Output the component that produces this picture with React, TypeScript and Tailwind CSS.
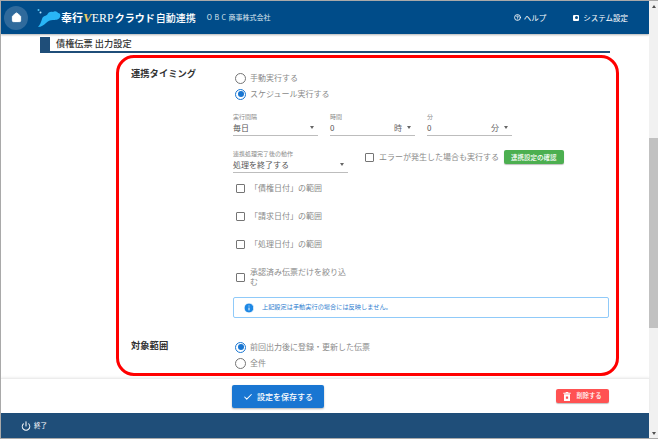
import { Check, Home, Info, Power, HelpCircle } from 'lucide-react';

const font = { fontFamily: '"Noto Sans CJK JP", "Noto Sans", sans-serif' };

function Radio({ label, checked }: { label: string; checked?: boolean }) {
  return (
    <div className="ml-[2px] flex h-4 items-center gap-[4px]">
      <span
        className={`flex h-[11px] w-[11px] items-center justify-center rounded-full border ${
          checked ? 'border-[#1976d2]' : 'border-[#757575]'
        }`}
      >
        {checked && <span className="h-[6px] w-[6px] rounded-full bg-[#1976d2]" />}
      </span>
      <span className="text-[8px] leading-none text-[#8a8a8a]">{label}</span>
    </div>
  );
}

function CheckBox({ label, className = '' }: { label: string; className?: string }) {
  return (
    <div className={`flex items-center gap-[5px] ${className}`}>
      <span className="h-[9px] w-[9px] shrink-0 rounded-[1px] border border-[#757575]" />
      <span className="text-[8px] leading-[10px] text-[#8a8a8a]">{label}</span>
    </div>
  );
}

function Select({
  label,
  value,
  unit,
  className = '',
}: {
  label: string;
  value: string;
  unit?: string;
  className?: string;
}) {
  return (
    <div className={className}>
      <div className="h-[8px] text-[6px] leading-[8px] text-[#8a8a8a]">{label}</div>
      <div className="flex h-[15px] items-center border-b border-[#bdbdbd] pb-[1px] pr-[4px]">
        <span className="flex-1 text-[8px] leading-none text-[#555]">{value}</span>
        {unit && <span className="mr-[5px] text-[8px] leading-none text-[#666]">{unit}</span>}
        <span className="h-0 w-0 border-x-[2.5px] border-t-[3px] border-x-transparent border-t-[#666]" />
      </div>
    </div>
  );
}

function Scrollbar() {
  return (
    <div className="flex w-[9px] shrink-0 flex-col items-center bg-[#f1f1f1]">
      <span className="mt-[4px] h-0 w-0 border-x-[2.5px] border-b-[3px] border-x-transparent border-b-[#505050]" />
      <div className="mt-[130px] h-[190px] w-full bg-[#c1c1c1]" />
      <div className="flex-1" />
      <span className="mb-[3px] h-0 w-0 border-x-[2.5px] border-t-[3px] border-x-transparent border-t-[#505050]" />
    </div>
  );
}

export default function App() {
  return (
    <div
      className="relative flex h-[439px] w-[658px] overflow-hidden border-l border-t border-b border-[#a9a9a9] bg-white"
      style={font}
    >
      <div className="flex min-w-0 flex-1 flex-col">
        {/* Header */}
        <header className="flex h-[33px] shrink-0 items-center bg-[#004c89] shadow-[0_1px_2px_rgba(0,0,0,0.3)]">
          <div className="ml-[3px] flex h-6 w-6 items-center justify-center rounded-full bg-[#2f6a9c]">
            <Home className="h-[11px] w-[11px] fill-white text-white" />
          </div>
          <svg viewBox="0 0 24 20" className="ml-[9px] h-[20px] w-[24px] shrink-0">
            <circle cx="1.5" cy="2" r="1" fill="#4fc3f7" />
            <circle cx="3.5" cy="4.5" r="1" fill="#b3e5fc" />
            <path
              d="M1 19 C3 17 4 14 5 11 C6 8 8 8 10 7 C11 4 14 3 16 4 C18 2 21 4 21 5 C23 5 24 7 23 9 C22 12 18 12 16 12 C13 12 11 13 9 15 C7 17 4 19 1 19Z"
              fill="#29b6f6"
            />
          </svg>
          <div className="flex items-baseline whitespace-nowrap font-bold text-white">
            <span className="text-[11px] leading-none">奉行</span>
            <span
              className="text-[13px] italic leading-none text-[#f2cf63]"
              style={{ fontFamily: '"Liberation Serif", serif' }}
            >
              V
            </span>
            <span
              className="mr-[1px] text-[12px] font-normal leading-none"
              style={{ fontFamily: '"Liberation Serif", serif' }}
            >
              ERP
            </span>
            <span className="text-[10px] leading-none">クラウド</span>
            <span className="ml-[1px] text-[10px] font-medium leading-none">自動連携</span>
          </div>
          <span className="ml-[11px] whitespace-nowrap text-[7px] leading-none text-[#dce6ef]">
            <span className="tracking-[2.5px]">OBC</span>商事株式会社
          </span>
          <div className="flex-1" />
          <div className="flex items-center gap-[3px] text-white">
            <HelpCircle className="h-[7px] w-[7px]" strokeWidth={3} />
            <span className="text-[7.5px] leading-none">ヘルプ</span>
          </div>
          <div className="ml-[27px] mr-[21px] flex items-center gap-[4px] text-white">
            <span className="flex h-[6px] w-[6px] items-center justify-center rounded-[1px] bg-white">
              <span className="h-[3px] w-[3px] rounded-full bg-[#004c89]" />
            </span>
            <span className="text-[7.5px] leading-none">システム設定</span>
          </div>
        </header>

        {/* Body */}
        <main className="relative min-h-0 flex-1 overflow-hidden pl-[39px] pr-[39px]">
          <div className="mt-[3px] flex h-4 items-stretch border-b-2 border-[#1f4e79]">
            <div className="w-[10px] bg-[#1f4e79]" />
            <h1 className="ml-[6px] self-center text-[9.2px] font-medium leading-none text-[#333]">
              債権伝票 出力設定
            </h1>
          </div>

          <div className="ml-[91px] mt-[14px] flex">
            <div className="w-[102px] shrink-0">
              <h2 className="mt-[2px] text-[9.3px] font-bold leading-none text-[#333]">連携タイミング</h2>
            </div>
            <div className="min-w-0 flex-1">
              <div className="mt-[3px]">
                <Radio label="手動実行する" />
                <Radio label="スケジュール実行する" checked />
              </div>

              <div className="mt-[11px] flex gap-3">
                <Select label="実行間隔" value="毎日" className="w-[85px]" />
                <Select label="時間" value="0" unit="時" className="w-[85px]" />
                <Select label="分" value="0" unit="分" className="w-[85px]" />
              </div>

              <div className="mt-[14px] flex items-start">
                <Select label="連携処理完了後の動作" value="処理を終了する" className="w-[115px]" />
                <div className="flex h-[14px] items-center">
                  <CheckBox label="エラーが発生した場合も実行する" className="ml-[17px]" />
                  <button className="ml-[5px] h-[14px] rounded-[2px] bg-[#4caf50] px-[7px] text-[6.5px] font-medium leading-none text-white shadow-[0_1px_1px_rgba(0,0,0,0.25)]">
                    連携設定の確認
                  </button>
                </div>
              </div>

              <div className="ml-[3px] mt-[10px] flex w-[112px] flex-col">
                <CheckBox label="「債権日付」の範囲" className="h-[10px]" />
                <CheckBox label="「請求日付」の範囲" className="mt-[18px] h-[10px]" />
                <CheckBox label="「処理日付」の範囲" className="mt-[18px] h-[10px]" />
                <CheckBox label="承認済み伝票だけを絞り込む" className="mt-[18px]" />
              </div>

              <div className="mt-[10px] flex h-[21px] w-[376px] items-center rounded-[2px] border border-[#90caf9]">
                <Info className="ml-[9px] h-[12px] w-[12px] fill-[#1e88e5] text-white" />
                <span className="ml-[7px] text-[6.2px] leading-none text-[#2f80d0]">
                  上記設定は手動実行の場合には反映しません。
                </span>
              </div>
            </div>
          </div>

          <div className="ml-[91px] mt-[21px] flex">
            <div className="w-[102px] shrink-0">
              <h2 className="mt-[2px] text-[9.3px] font-bold leading-none text-[#333]">対象範囲</h2>
            </div>
            <div>
              <Radio label="前回出力後に登録・更新した伝票" checked />
              <Radio label="全件" />
            </div>
          </div>
        </main>

        {/* Action bar */}
        <div className="relative flex h-[35px] shrink-0 items-center border-t border-[#ececec] pr-[40px] shadow-[0_-1px_2px_rgba(0,0,0,0.06)]">
          <div className="flex-1" />
          <button className="absolute left-[231px] top-[6px] flex h-[23px] w-[92px] items-center justify-center gap-[4px] rounded-[2px] bg-[#1976d2] text-white shadow-[0_1px_2px_rgba(0,0,0,0.3)]">
            <Check className="h-[10px] w-[10px]" strokeWidth={2.5} />
            <span className="text-[8px] font-medium leading-none">設定を保存する</span>
          </button>
          <button className="flex h-[14px] w-[53px] items-center justify-center gap-[5px] rounded-[2px] bg-[#ff5252] text-white shadow-[0_1px_1px_rgba(0,0,0,0.25)]">
            <svg viewBox="0 0 10 12" className="h-[9px] w-[8px]">
              <path d="M3.5 0h3l.5 1h3v1.2H0V1h3z" fill="#fff" />
              <path fillRule="evenodd" d="M1 3h8v9H1zM3.5 6v3h3V6z" fill="#fff" />
            </svg>
            <span className="text-[6.3px] font-medium leading-none">削除する</span>
          </button>
        </div>

        {/* Footer */}
        <footer className="flex h-[25px] shrink-0 items-center bg-[#1f4e79] pl-[20px] text-white">
          <Power className="h-[10px] w-[10px]" strokeWidth={2.5} />
          <span className="ml-[3px] text-[6.5px] leading-none">終了</span>
        </footer>
      </div>

      <Scrollbar />

      {/* red annotation frame */}
      <div className="pointer-events-none absolute left-[115px] top-[54px] h-[321px] w-[503px] rounded-[18px] border-[3px] border-[#ff0000]" />
    </div>
  );
}
